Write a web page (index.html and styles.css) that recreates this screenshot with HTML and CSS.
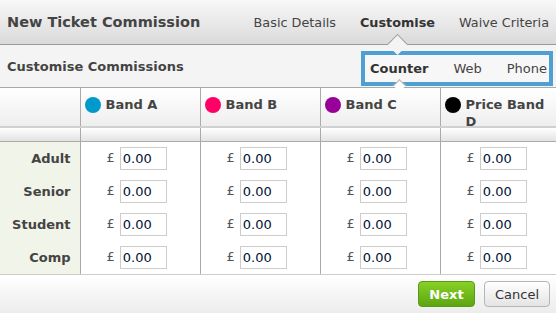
FILE: index.html
```html
<!DOCTYPE html>
<html lang="en">
<head>
  <meta charset="UTF-8" />
  <title>New Ticket Commission</title>
  <link rel="stylesheet" href="styles.css">
</head>
<body>
  <div class="dialog">
    <div class="titlebar">
      <h1>New Ticket Commission</h1>
      <div class="steps">
        <span class="step">Basic Details</span>
        <span class="step active">Customise</span>
        <span class="step">Waive Criteria</span>
      </div>
    </div>

    <div class="section">
      <h2>Customise Commissions</h2>
      <div class="channels">
        <span class="channel active">Counter</span>
        <span class="channel">Web</span>
        <span class="channel">Phone</span>
      </div>
    </div>

    <table class="bands">
      <colgroup>
        <col class="col-label">
        <col class="col-band">
        <col class="col-band">
        <col class="col-band">
        <col>
      </colgroup>
      <thead>
        <tr class="head">
          <th></th>
          <th><div class="band"><span class="dot" style="background:#0099cc"></span><span>Band A</span></div></th>
          <th><div class="band"><span class="dot" style="background:#ff0066"></span><span>Band B</span></div></th>
          <th><div class="band"><span class="dot" style="background:#990099"></span><span>Band C</span></div></th>
          <th><div class="band"><span class="dot" style="background:#000000"></span><span>Price Band D</span></div></th>
        </tr>
        <tr class="spacer">
          <th></th><th></th><th></th><th></th><th></th>
        </tr>
      </thead>
      <tbody>
        <tr>
          <td class="label">Adult</td>
          <td><span class="pound">£</span><input type="text" value="0.00"></td>
          <td><span class="pound">£</span><input type="text" value="0.00"></td>
          <td><span class="pound">£</span><input type="text" value="0.00"></td>
          <td><span class="pound">£</span><input type="text" value="0.00"></td>
        </tr>
        <tr>
          <td class="label">Senior</td>
          <td><span class="pound">£</span><input type="text" value="0.00"></td>
          <td><span class="pound">£</span><input type="text" value="0.00"></td>
          <td><span class="pound">£</span><input type="text" value="0.00"></td>
          <td><span class="pound">£</span><input type="text" value="0.00"></td>
        </tr>
        <tr>
          <td class="label">Student</td>
          <td><span class="pound">£</span><input type="text" value="0.00"></td>
          <td><span class="pound">£</span><input type="text" value="0.00"></td>
          <td><span class="pound">£</span><input type="text" value="0.00"></td>
          <td><span class="pound">£</span><input type="text" value="0.00"></td>
        </tr>
        <tr>
          <td class="label">Comp</td>
          <td><span class="pound">£</span><input type="text" value="0.00"></td>
          <td><span class="pound">£</span><input type="text" value="0.00"></td>
          <td><span class="pound">£</span><input type="text" value="0.00"></td>
          <td><span class="pound">£</span><input type="text" value="0.00"></td>
        </tr>
      </tbody>
    </table>

    <div class="footer">
      <button class="btn btn-next">Next</button>
      <button class="btn btn-cancel">Cancel</button>
    </div>
  </div>
</body>
</html>
```

FILE: styles.css
```css
body {
  margin: 0;
  font-family: "DejaVu Sans", Verdana, sans-serif;
  color: #444;
  background: #fff;
}

.dialog {
  width: 556px;
  height: 313px;
  overflow: hidden;
  display: flex;
  flex-direction: column;
}

.titlebar {
  flex: none;
  height: 44px;
  display: flex;
  align-items: center;
  justify-content: space-between;
  padding: 0 7px;
  background: linear-gradient(to bottom, #f8f8f8, #dadada);
  border-bottom: 1px solid #999;
}

.titlebar h1 {
  margin: 0;
  font-size: 14.5px;
  font-weight: bold;
  color: #444;
}

.steps {
  display: flex;
  gap: 24px;
  font-size: 12.8px;
}

.step {
  position: relative;
  color: #444;
}

.step.active {
  font-weight: bold;
  color: #333;
}

.step.active::after {
  content: "";
  position: absolute;
  left: 50%;
  bottom: -22px;
  width: 14px;
  height: 14px;
  margin-left: -7px;
  background: #f4f4f4;
  border-top: 1px solid #999;
  border-left: 1px solid #999;
  transform: rotate(45deg);
}

.section {
  flex: none;
  height: 42px;
  display: flex;
  align-items: center;
  justify-content: space-between;
  padding: 0 3px 0 7px;
  background: #f4f4f4;
  border-bottom: 1px solid #aaa;
}

.section h2 {
  margin: 0;
  font-size: 13px;
  font-weight: bold;
  color: #444;
}

.channels {
  display: flex;
  gap: 25px;
  align-items: center;
  height: 27px;
  margin-top: 4px;
  padding: 0 2px 0 5px;
  border: 4px solid #4f9fd3;
  font-size: 13px;
  background: #f7f7f7;
}

.channel {
  position: relative;
}

.channel.active {
  font-weight: bold;
  color: #333;
}

.channel.active::after {
  content: "";
  position: absolute;
  left: 50%;
  bottom: -14px;
  width: 8px;
  height: 8px;
  margin-left: -4px;
  background: #fff;
  border-top: 1px solid #aaa;
  border-left: 1px solid #aaa;
  transform: rotate(45deg);
}

.bands {
  flex: none;
  width: 556px;
  table-layout: fixed;
  border-collapse: collapse;
}

.col-label {
  width: 80px;
}

.col-band {
  width: 120px;
}

.bands th,
.bands td {
  border-left: 1px solid #aaa;
  padding: 0;
}

.bands tr > :first-child {
  border-left: none;
}

.head th {
  height: 30px;
  vertical-align: top;
  text-align: left;
  background: linear-gradient(to bottom, #fff, #eee);
  border-bottom: 2px solid #d0d0d0;
  padding: 8px 8px 0 4px;
}

.band {
  display: flex;
  gap: 5px;
  height: 30px;
  font-size: 13px;
  font-weight: bold;
  line-height: 17px;
  color: #444;
}

.dot {
  flex: none;
  width: 16px;
  height: 16px;
  border-radius: 50%;
  margin-top: 1px;
}

.spacer th {
  height: 13px;
  background: linear-gradient(to bottom, #fff, #e2e2e2);
  border-bottom: 1px solid #aaa;
}

.bands tbody td {
  height: 33px;
  padding-left: 26px;
  font-size: 13px;
  white-space: nowrap;
}

.bands tbody tr:last-child td {
  border-bottom: 1px solid #ccc;
}

.bands td.label {
  padding: 0 9px 0 0;
  text-align: right;
  font-weight: bold;
  color: #444;
  background: #f1f4e9;
}

.pound {
  color: #555;
  margin-right: 5px;
}

.bands input {
  width: 47px;
  height: 23px;
  box-sizing: border-box;
  border: 1px solid #ccc;
  padding: 0 2px;
  font-family: inherit;
  font-size: 13px;
  color: #001133;
  vertical-align: middle;
}

.footer {
  flex: 1;
  display: flex;
  justify-content: flex-end;
  align-items: center;
  gap: 9px;
  padding: 0 6px;
  background: linear-gradient(to bottom, #fff, #ececec);
}

.btn {
  height: 26px;
  border-radius: 4px;
  font-family: inherit;
  font-size: 13px;
  padding: 0;
  cursor: pointer;
}

.btn-next {
  width: 57px;
  font-weight: bold;
  color: #fff;
  border: 1px solid #5a9a12;
  background: linear-gradient(to bottom, #88d126, #5ca511);
}

.btn-cancel {
  width: 66px;
  color: #333;
  border: 1px solid #b5b5b5;
  background: linear-gradient(to bottom, #fff, #e4e4e4);
}
```
